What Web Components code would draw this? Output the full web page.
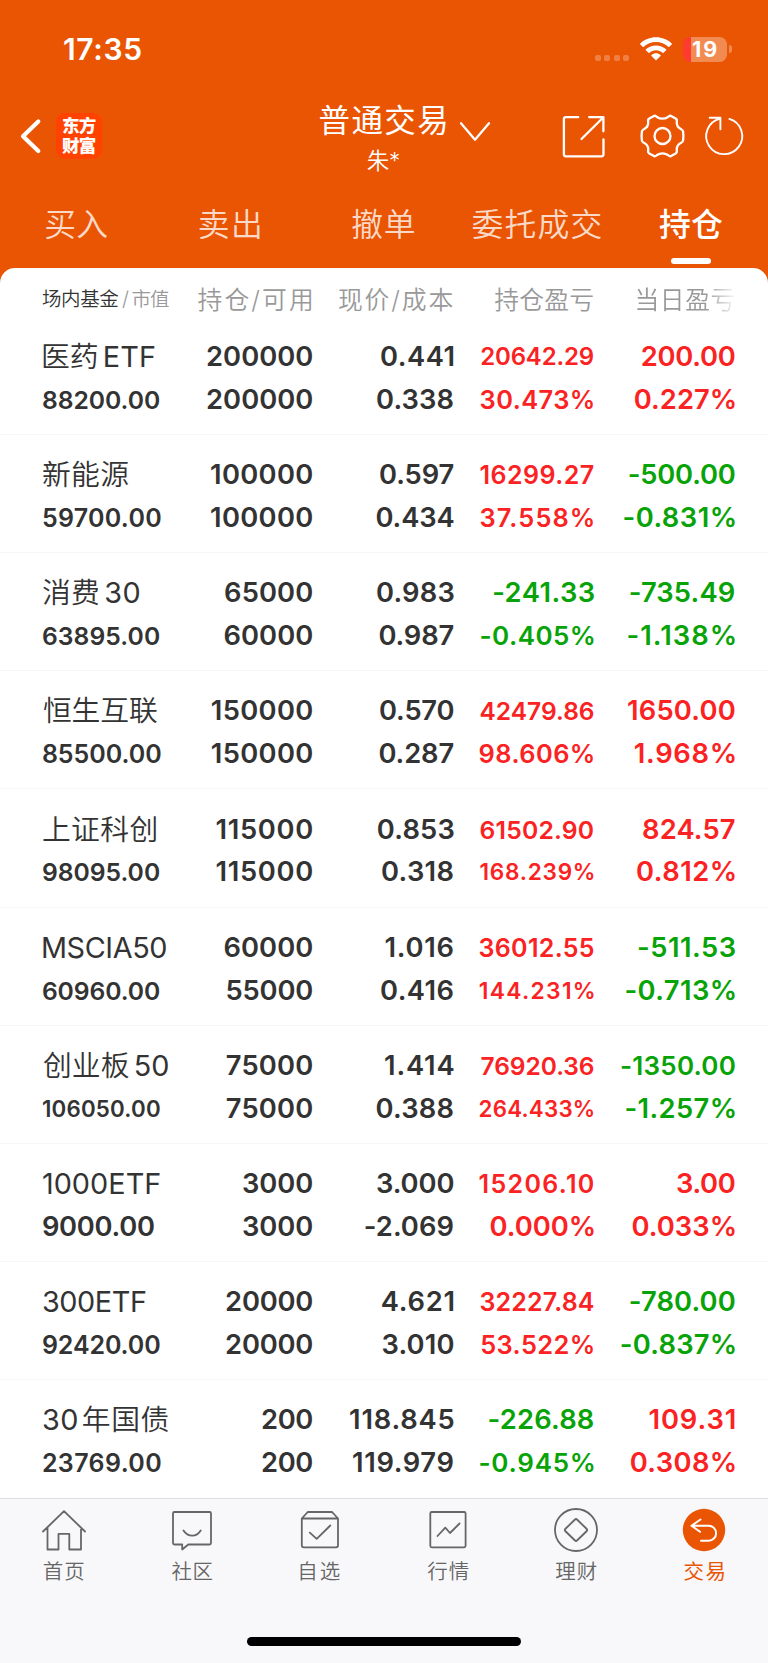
<!DOCTYPE html>
<html lang="zh-CN">
<head>
<meta charset="utf-8">
<title>持仓</title>
<style>
html,body{margin:0;padding:0}
body{width:768px;height:1663px;overflow:hidden;background:#fff;font-family:Inter,"Noto Sans CJK SC",sans-serif}
</style>
</head>
<body>
<trade-app></trade-app>
<script>
const FONT = 'Inter, "Noto Sans CJK SC", sans-serif';
const ctx = document.createElement('canvas').getContext('2d');

// Text tracked so that its ink spans exactly `w` pixels; side bearings are trimmed.
class FitText extends HTMLElement {
  connectedCallback() {
    const text = this.getAttribute('text');
    const w = +this.getAttribute('w'), size = +this.getAttribute('size');
    const weight = this.getAttribute('weight') || 400;
    const gap = +this.getAttribute('gap') || 0;
    ctx.font = `${weight} ${size}px ${FONT}`;
    const m = ctx.measureText(text);
    const ink = m.actualBoundingBoxLeft + m.actualBoundingBoxRight;
    const ls = text.length > 1 ? (w - ink - gap) / (text.length - 1) : 0;
    const parts = gap ? text.match(/[\x00-\x7f]+|[^\x00-\x7f]+/g) : [text];
    this.attachShadow({mode: 'open'}).innerHTML = `<style>
      :host{display:block;flex:none;white-space:nowrap;text-autospace:no-autospace;line-height:inherit;
        font-family:${FONT};font-size:${size}px;font-weight:${weight};letter-spacing:${ls}px;
        margin-left:${m.actualBoundingBoxLeft}px;margin-right:${-(m.width + ls - m.actualBoundingBoxRight)}px}
      span + span{margin-left:${gap}px}
      .latin{font-weight:400}
    </style>${parts.map(p => `<span${gap && p.charCodeAt(0) < 128 ? ' class="latin"' : ''}>${p}</span>`).join('')}`;
  }
}
customElements.define('fit-text', FitText);
const t = (text, w, size, weight = 400, gap = 0, cls = '') =>
  `<fit-text class="${cls}" text="${text}" w="${w}" size="${size}" weight="${weight}" gap="${gap}"></fit-text>`;

customElements.define('status-bar', class extends HTMLElement {
  connectedCallback() {
    this.attachShadow({mode: 'open'}).innerHTML = `<style>
      :host{display:flex;height:98px;align-items:center;color:#fff;line-height:30px;padding:0 36px 0 64px;justify-content:space-between}
      .right{display:flex;align-items:center;height:26px}
      .dots{display:flex;gap:3.3px;margin:17px 11px 0 0}
      .dots i{width:6px;height:6px;border-radius:2px;background:rgba(255,255,255,.25)}
      .wifi{margin-right:11px}
      .bat{flex:none;width:44.4px;height:25px;border-radius:7.5px;background:linear-gradient(90deg,#ff3b30 8.4px,#f28b51 8.4px);display:flex;align-items:center;box-sizing:border-box;padding:1.500px 0 0 9px;line-height:25px}
      .nub{width:3px;height:8px;margin-left:1.6px;border-radius:0 3px 3px 0;background:#f28b51}
    </style>
    ${t('17:35', 77.3, 30, 600)}
    <div class="right"><div class="dots"><i></i><i></i><i></i><i></i></div>
    <svg class="wifi" width="32" height="24" viewBox="0 0 32 24" fill="#fff">
      <path d="M16 .3C9.900.3 4.400 2.600.3 6.400c-.3.3-.3.700 0 1l2.400 2.400c.3.3.700.3 1 0C7 6.800 11.300 5 16 5s9 1.800 12.300 4.800c.3.3.700.3 1 0l2.400-2.400c.3-.3.3-.700 0-1C27.600 2.600 22.100.3 16 .3z"/>
      <path d="M16 8.400c-3.900 0-7.400 1.500-10.100 3.900-.3.3-.3.700 0 1l2.500 2.400c.3.3.700.3 1 0 1.800-1.500 4.100-2.500 6.600-2.500s4.800 1 6.600 2.500c.3.300.7.300 1 0l2.500-2.400c.3-.3.3-.7 0-1C23.400 9.900 19.900 8.400 16 8.400z"/>
      <path d="M16 16.300c-1.700 0-3.300.6-4.500 1.700-.3.300-.3.700 0 1l4 4.100c.3.300.7.300 1 0l4-4.100c.3-.3.3-.7 0-1-1.200-1.100-2.800-1.700-4.500-1.700z"/>
    </svg>
    <div class="bat">${t('19', 24.3, 21.500, 700)}</div><div class="nub"></div></div>`;
  }
});

customElements.define('title-bar', class extends HTMLElement {
  connectedCallback() {
    this.attachShadow({mode: 'open'}).innerHTML = `<style>
      :host{display:grid;grid-template-columns:56px 45px 218.500px 126.800px 1fr;height:90px;color:#fff}
      svg{display:block;fill:none;stroke:#fff}
      .logo{width:45.500px;height:45.500px;margin-top:15px;border-radius:9px;background:#ff4200;box-sizing:border-box;padding:3px 0 0 6px;line-height:20px}
      .title{grid-column:4;display:flex;flex-direction:column;align-items:center}
      .a{line-height:42px;height:42px;padding-top:2px}.b{line-height:36px;height:36px;display:flex;padding-top:1px}
    </style>
    <svg width="56" height="90" viewBox="0 98 56 90" stroke-width="4.2" stroke-linecap="round" stroke-linejoin="round"><path d="M38.300 121.500 23 136.200 38.300 151"/></svg>
    <div class="logo">${t('东方', 33.700, 17.500, 900)}${t('财富', 33.700, 17.500, 900)}</div>
    <div class="title"><div class="a">${t('普通交易', 126.800, 31.500, 400)}</div><div class="b">${t('朱*', 32.300, 22.500, 350)}</div></div>
    <svg width="321.700" height="90" viewBox="446.300 98 321.700 90" stroke-width="2.300" stroke-linejoin="round" stroke-linecap="round">
      <path d="M461.300 123.300 475.300 139.700 489.300 123.300"/>
      <path d="M578.500 117.200H566.200Q564.200 117.200 564.200 119.200V154.300Q564.200 156.300 566.200 156.300H601.800Q603.800 156.300 603.800 154.300V139.500M589.500 117.200H603.700V131.300M603.200 117.700 581.800 139"/>
      <g transform="translate(662.800 136)"><circle r="8"/>
      <path d="M-8.500 -20.100Q-7 -20.600 -5.500 -19Q-3 -17.300 0 -17.300Q3 -17.300 5.500 -19Q7 -20.600 8.500 -20.100L13.200 -17.500Q14.800 -16.500 14.300 -14.300Q13.800 -9.200 18.300 -7Q20.300 -6 20.600 -4.500Q21.200 0 20.600 4.500Q20.300 6 18.300 7Q13.800 9.200 14.300 14.300Q14.800 16.500 13.200 17.500L8.500 20.100Q7 20.600 5.500 19Q3 17.300 0 17.300Q-3 17.300 -5.500 19Q-7 20.600 -8.500 20.100L-13.200 17.500Q-14.800 16.500 -14.300 14.300Q-13.800 9.200 -18.300 7Q-20.300 6 -20.600 4.500Q-21.200 0 -20.600 -4.500Q-20.300 -6 -18.300 -7Q-13.800 -9.200 -14.300 -14.300Q-14.800 -16.500 -13.200 -17.500Z"/></g>
      <path stroke-width="1.900" transform="translate(1 0)" d="M728.700 118.900A18 18 0 1 1 719.500 118.600M709 117.800H719.700V129.300"/>
    </svg>`;
  }
});

customElements.define('tab-strip', class extends HTMLElement {
  connectedCallback() {
    const tabs = [['买入', 62], ['卖出', 60.300], ['撤单', 62.500], ['委托成交', 129], ['持仓', 63]];
    this.attachShadow({mode: 'open'}).innerHTML = `<style>
      :host{display:grid;grid-template-columns:repeat(5,153.600px);height:80px;color:rgba(255,255,255,.8);line-height:74px}
      div{display:flex;flex-direction:column;align-items:center}
      fit-text{height:70px;position:relative;left:-.6px}
      .on{color:#fff}
      .on::after{content:"";width:39.500px;height:6px;border-radius:3px;background:#fff}
    </style>${tabs.map(([n, w], i) => `<div class="${i == 4 ? 'on' : ''}">${t(n, w, 31.800, i == 4 ? 500 : 350)}</div>`).join('')}`;
  }
});

customElements.define('table-head', class extends HTMLElement {
  connectedCallback() {
    this.attachShadow({mode: 'open'}).innerHTML = `<style>
      :host{display:grid;grid-template-columns:126px 142px 141.600px 140.600px 141.300px;padding-left:43px;height:48.900px;line-height:65px;color:#999}
      div{display:flex;justify-content:flex-end}
      div.first{justify-content:flex-start;line-height:62px;margin-left:-1px;gap:3.600px}
      .k{color:#333}
      .fade{-webkit-mask:linear-gradient(90deg,#000 calc(100% - 29px),transparent calc(100% + 4px));mask:linear-gradient(90deg,#000 calc(100% - 29px),transparent calc(100% + 4px))}
    </style>
    <div class="first"><span class="k">${t('场内基金', 76.300, 19.500, 350)}</span><span>${t('/', 6, 20, 350)}</span><span>${t('市值', 36.400, 19.500, 350)}</span></div>
    <div>${t('持仓/可用', 113.500, 24.800, 350)}</div><div>${t('现价/成本', 113.700, 24.800, 350)}</div>
    <div>${t('持仓盈亏', 99, 24.800, 350)}</div><div class="fade">${t('当日盈亏', 98, 24.800, 350)}</div>`;
  }
});

// name, ink width, script gap | value, right edge, size | then texts with their left ink edges (and sizes)
const ROWS = [
  ['医药ETF', 110.6, 4, '88200.00', 160, 24.7, '200000', 207.3, '200000', 207.3, '0.441', 381.3, '0.338', 377.3, '20642.29', 481.3, 24, '30.473%', 480.7, 25.4, '200.00', 642, 27.3, '0.227%', 635],
  ['新能源', 85.4, 0, '59700.00', 161.3, 25, '100000', 211.3, '100000', 211.3, '0.597', 380.3, '0.434', 376.7, '16299.27', 480.7, 25, '37.558%', 480.7, 25.4, '-500.00', 629, 27.3, '-0.831%', 623.7],
  ['消费30', 95.3, 4, '63895.00', 160, 24.7, '65000', 225.3, '60000', 224.7, '0.983', 377.3, '0.987', 379.7, '-241.33', 493.3, 27.3, '-0.405%', 480.7, 26, '-735.49', 630, 27.3, '-1.138%', 627.7],
  ['恒生互联', 114, 0, '85500.00', 161.3, 25, '150000', 212, '150000', 212, '0.570', 380.3, '0.287', 379.7, '42479.86', 480.7, 24.5, '98.606%', 479.7, 25.4, '1650.00', 628.3, 27.3, '1.968%', 635],
  ['上证科创', 113.6, 0, '98095.00', 160, 24.7, '115000', 216.7, '115000', 216.7, '0.853', 378, '0.318', 382.3, '61502.90', 480.7, 24.7, '168.239%', 480.7, 22.6, '824.57', 643.3, 27.3, '0.812%', 637.3],
  ['MSCIA50', 123.4, 0, '60960.00', 160, 24.7, '60000', 224.7, '55000', 226.7, '1.016', 385.7, '0.416', 381.3, '36012.55', 479.7, 25, '144.231%', 480, 22.8, '-511.53', 638.3, 27.3, '-0.713%', 625.7],
  ['创业板50', 124, 4, '106050.00', 160, 22.3, '75000', 227, '75000', 227, '1.414', 385.3, '0.388', 376.7, '76920.36', 480.7, 24.5, '264.433%', 479.7, 22.3, '-1350.00', 621.3, 26, '-1.257%', 625.7],
  ['1000ETF', 117.4, 0, '9000.00', 154, 27.3, '3000', 243.3, '3000', 243.3, '3.000', 377.3, '-2.069', 365, '15206.10', 479.7, 25, '0.000%', 490.7, 27.3, '3.00', 677.3, 27.3, '0.033%', 632.7],
  ['300ETF', 103, 0, '92420.00', 160.3, 25, '20000', 226.3, '20000', 226.3, '4.621', 382, '3.010', 382.7, '32227.84', 480.7, 25, '53.522%', 481.3, 25.4, '-780.00', 630, 27.3, '-0.837%', 621],
  ['30年国债', 124.800, 3, '23769.00', 161.3, 25, '200', 262.3, '200', 262.3, '118.845', 350.3, '119.979', 353.3, '-226.88', 488.7, 27.3, '-0.945%', 479.7, 26, '109.31', 649.7, 27.3, '0.308%', 631],
];

customElements.define('holding-row', class extends HTMLElement {
  connectedCallback() {
    const r = ROWS[+this.getAttribute('index')];
    const n = (txt, left, right, size = 27.3) => t(txt, (right - left).toFixed(1), size, 580);
    const tone = s => s.startsWith('-') ? 'down' : 'up';
    this.attachShadow({mode: 'open'}).innerHTML = `<style>
      :host{display:grid;grid-template-columns:127px 142.400px 141.200px 140.400px 140.900px;padding:19.200px 0 0 42.900px;height:118.140px;box-sizing:border-box;line-height:42.800px;color:#333;border-bottom:1.500px solid #f6f6f6}
      :host(:last-of-type){border-bottom:0}
      div{display:flex;flex-direction:column;align-items:flex-end}
      div:first-of-type{align-items:flex-start}
      fit-text{height:42.800px}
      .up{color:#fa2222}.down{color:#08a308}
    </style>
    <div>${t(r[0], r[1], 28.800, /^[\x00-\x7f]+$/.test(r[0]) ? 400 : 350, r[2])}${n(r[3], 43, r[4], r[5])}</div>
    <div>${n(r[6], r[7], 312.5)}${n(r[8], r[9], 312.5)}</div>
    <div>${n(r[10], r[11], 453.700)}${n(r[12], r[13], 453.700)}</div>
    <div class="${tone(r[14])}">${n(r[14], r[15], 594, r[16])}${n(r[17], r[18], 594, r[19])}</div>
    <div class="${tone(r[20])}">${n(r[20], r[21], 735, r[22])}${n(r[23], r[24], 735)}</div>`;
  }
});

const ICONS = {
  home: '<path d="M-21 1.500 0 -18.800 21 1.500M-16.500 -2.500V19.500H-5.500V3.800H5.300V19.500H17V-2.500"/>',
  chat: '<path d="M-17.500 -18H17.500Q19 -18 19 -16.500V13Q19 14.500 17.500 14.500H-3.700L-9.800 19.500V14.500H-17.500Q-19 14.500 -19 13V-16.500Q-19 -18 -17.500 -18ZM-8.500 .5Q-5.200 5.600 .2 5.600T8.700 .5"/>',
  pick: '<path d="M-18.200 -11.500H18V15.300Q18 17.300 16 17.300H-16.200Q-18.200 17.300 -18.200 15.300ZM-18.200 -11.500 -13.200 -17Q-12.500 -18 -11.500 -18H11.300Q12.300 -18 13 -17L18 -11.500M-10.200 2.700-3.300 8.800 10.300 -4.500"/>',
  chart: '<rect x="-17.700" y="-18" width="35.300" height="35.300" rx="1.500"/><path d="M-10.500 6-2.700 -2.300 2 3 11.500 -6.500"/>',
  money: '<circle r="21"/><path d="M-1 -10.500Q0 -11.500 1 -10.500L10.800 -1Q11.600 0 10.800 1L1 10.500Q0 11.500 -1 10.500L-10.800 1Q-11.600 0 -10.800 -1Z"/>',
  trade: '<circle r="21.200" fill="#ea5504" stroke="none"/><path stroke="#fff" stroke-width="2" d="M-3.500 -10.500-12.500 -4.300-4 1.800M-12.500 -4.300H4.600A7.500 7.500 0 0 1 4.600 10.700H-3"/>'
};
customElements.define('bottom-nav', class extends HTMLElement {
  connectedCallback() {
    const items = [['home', '首页', 40.500], ['chat', '社区', 41], ['pick', '自选', 39.700], ['chart', '行情', 41.500], ['money', '理财', 41.300], ['trade', '交易', 40.800]];
    this.attachShadow({mode: 'open'}).innerHTML = `<style>
      :host{display:flex;flex-direction:column;align-items:center;flex:1;box-sizing:border-box;background:#f8f8fb;border-top:1.500px solid #dedee2;color:#666}
      .row{display:grid;grid-template-columns:repeat(6,128px);padding-top:7px}
      .row div{display:flex;flex-direction:column;align-items:center;line-height:36px}
      svg{display:block;fill:none;stroke:#666;stroke-width:1.800;stroke-linejoin:round;stroke-linecap:round}
      .row div.on{color:#ea5504}
      fit-text{height:36px}
      .bar{width:273.700px;height:9.700px;border-radius:5px;background:#000;margin-top:46.500px}
    </style><div class="row">${items.map(([k, n, w]) => `<div class="${k == 'trade' ? 'on' : ''}"><svg width="48" height="48" viewBox="-24 -24 48 48">${ICONS[k]}</svg>${t(n, w, 20.500, k == 'trade' ? 400 : 350)}</div>`).join('')}</div><div class="bar"></div>`;
  }
});

customElements.define('trade-app', class extends HTMLElement {
  connectedCallback() {
    this.attachShadow({mode: 'open'}).innerHTML = `<style>
      :host{display:flex;flex-direction:column;height:1663px;background:#ea5504}
      .card{height:1230px;flex:none;background:#fff;border-radius:15px 15px 0 0}
    </style><status-bar></status-bar><title-bar></title-bar><tab-strip></tab-strip>
    <div class="card"><table-head></table-head>${ROWS.map((_, i) => `<holding-row index="${i}"></holding-row>`).join('')}</div>
    <bottom-nav></bottom-nav>`;
  }
});
</script>
</body>
</html>
